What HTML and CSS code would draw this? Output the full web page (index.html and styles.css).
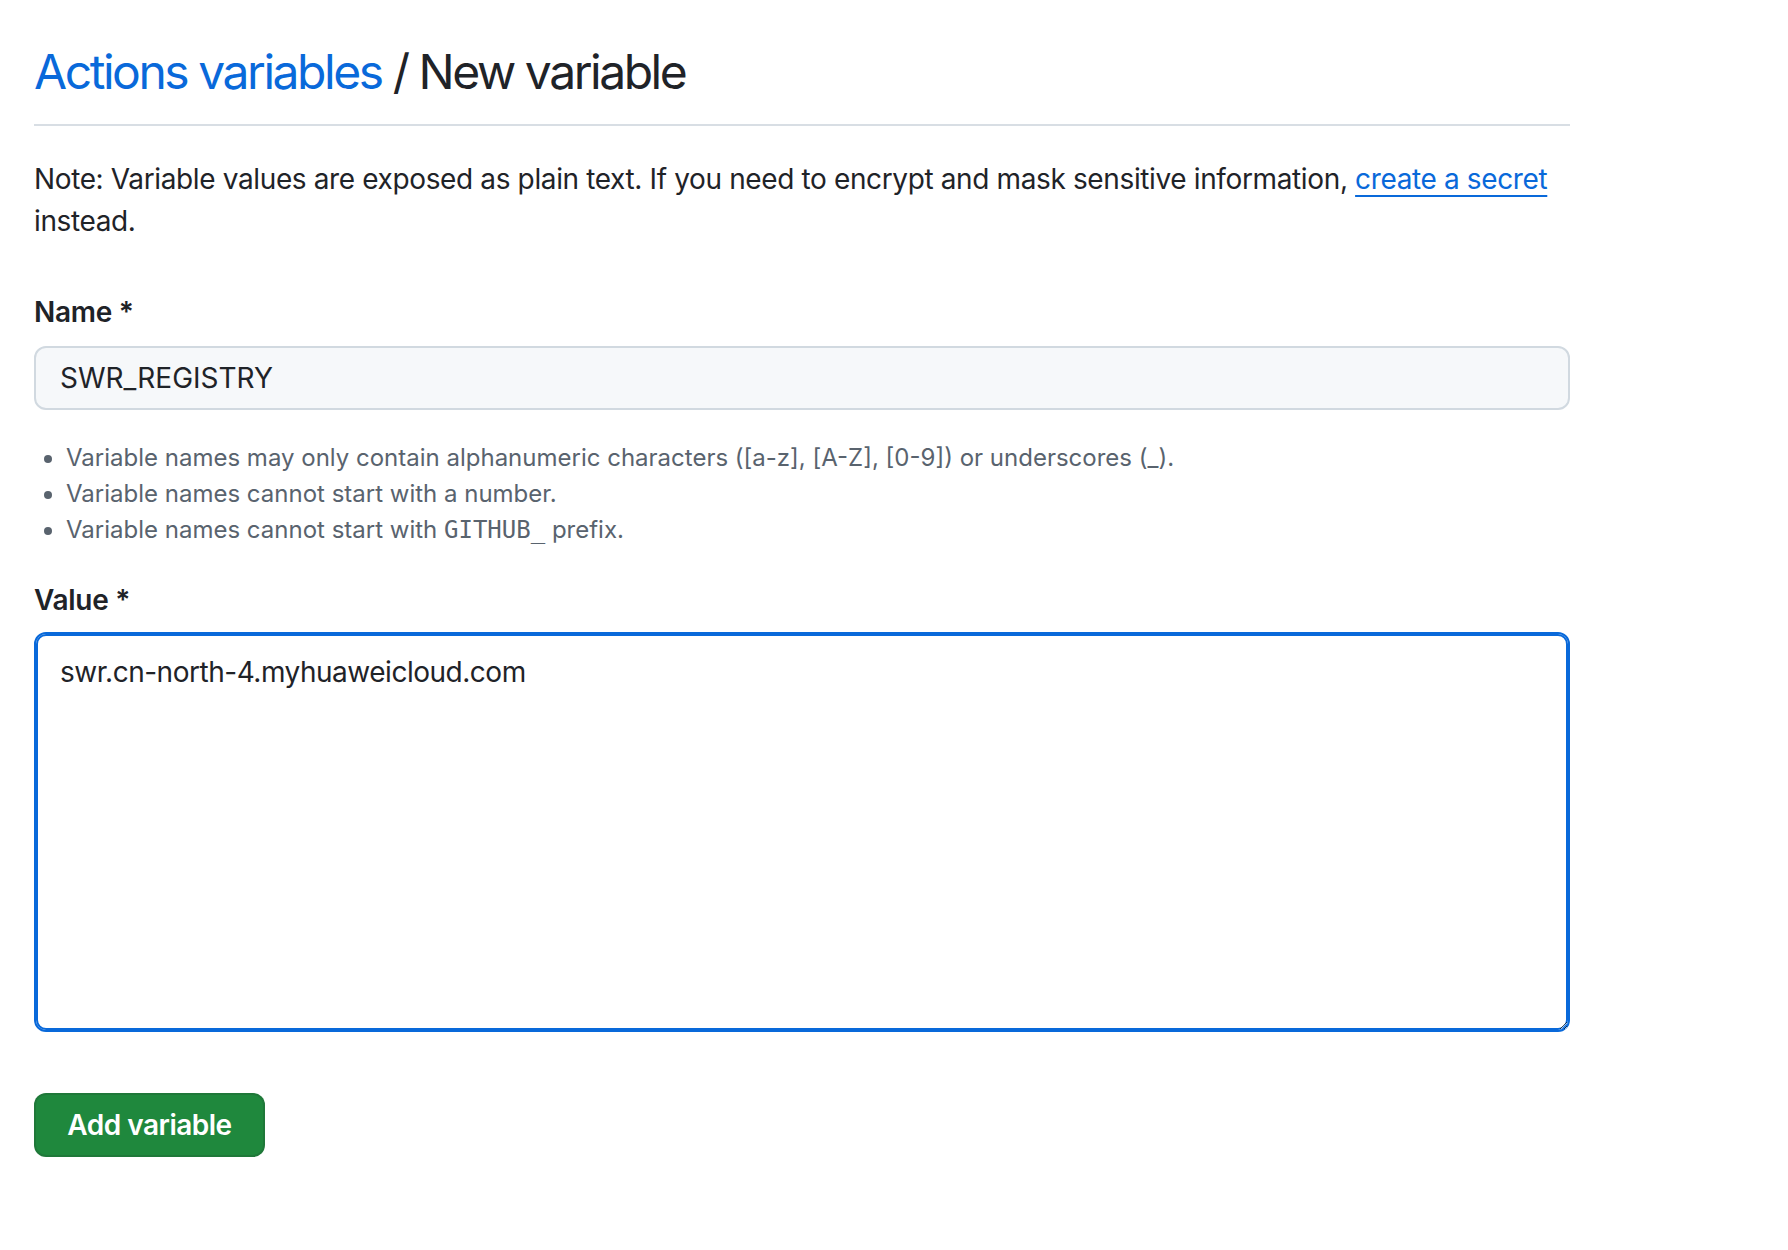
FILE: index.html
```html
<!DOCTYPE html>
<html lang="en">
<head>
<meta charset="utf-8">
<title>New variable</title>
<link rel="stylesheet" href="styles.css">
</head>
<body>
<main class="page">
  <div class="subhead">
    <h2 class="subhead-heading"><a class="link" href="#">Actions variables</a> / New variable</h2>
  </div>
  <p class="note">Note: Variable values are exposed as plain text. If you need to encrypt and mask sensitive information, <a class="link underline" href="#">create a secret</a> instead.</p>
  <form class="form">
    <label class="label label-name" for="name">Name *</label>
    <input class="input" id="name" type="text" value="SWR_REGISTRY">
    <ul class="hints">
      <li>Variable names may only contain alphanumeric characters ([a-z], [A-Z], [0-9]) or underscores (_).</li>
      <li>Variable names cannot start with a number.</li>
      <li>Variable names cannot start with <code class="mono">GITHUB_</code> prefix.</li>
    </ul>
    <label class="label label-value" for="value">Value *</label>
    <textarea class="textarea" id="value">swr.cn-north-4.myhuaweicloud.com</textarea>
    <button class="btn" type="button">Add variable</button>
  </form>
</main>
</body>
</html>
```

FILE: styles.css
```css
html, body {
  margin: 0;
  padding: 0;
  background: #ffffff;
}
body {
  font-family: Inter, "Liberation Sans", Arial, sans-serif;
  color: #1f2328;
}
.page {
  width: 1536px;
  padding-left: 34px;
  padding-top: 36px;
}
.subhead {
  padding-bottom: 16px;
  border-bottom: 2px solid #d8dee4;
}
.subhead-heading {
  margin: 0;
  font-size: 48px;
  font-weight: 400;
  line-height: 72px;
  letter-spacing: -2.45px;
  color: #1f2328;
}
.link {
  color: #0969da;
  text-decoration: none;
}
.underline {
  text-decoration: underline;
  text-underline-offset: 6px;
  text-decoration-thickness: 2px;
}
.note {
  margin: 32px 0 0 0;
  font-size: 28px;
  line-height: 42px;
  letter-spacing: -0.37px;
}
.form {
  display: flex;
  flex-direction: column;
  align-items: flex-start;
}
.label {
  display: block;
  font-size: 28px;
  font-weight: 600;
  line-height: 42px;
  letter-spacing: -0.3px;
}
.label-name {
  margin-top: 49px;
}
.label-value {
  margin-top: 31px;
}
.input {
  box-sizing: border-box;
  margin-top: 13px;
  width: 1536px;
  height: 64px;
  padding: 0 24px;
  border: 2px solid #d1d9e0;
  border-radius: 12px;
  background: #f6f8fa;
  font-family: inherit;
  font-size: 28px;
  color: #1f2328;
  outline: none;
}
.hints {
  margin: 30px 0 0 0;
  padding-left: 32px;
  font-size: 24px;
  line-height: 36px;
  color: #59636e;
}
.mono {
  font-family: "DejaVu Sans Mono", "Liberation Mono", monospace;
  font-size: 24px;
}
.textarea {
  box-sizing: border-box;
  margin-top: 11px;
  width: 1536px;
  height: 400px;
  padding: 18px 24px 16px 24px;
  border: 2px solid #0969da;
  border-radius: 12px;
  box-shadow: inset 0 0 0 2px #0969da;
  background: #ffffff;
  font-family: inherit;
  font-size: 28px;
  line-height: 40px;
  letter-spacing: -0.48px;
  color: #1f2328;
  outline: none;
  resize: vertical;
}
.btn {
  box-sizing: border-box;
  margin-top: 61px;
  width: 231px;
  height: 64px;
  padding: 0;
  border: 2px solid rgba(31, 35, 40, 0.15);
  border-radius: 12px;
  background: #1f883d;
  color: #ffffff;
  font-family: inherit;
  font-size: 28px;
  font-weight: 600;
  letter-spacing: -0.5px;
  cursor: pointer;
}
```
